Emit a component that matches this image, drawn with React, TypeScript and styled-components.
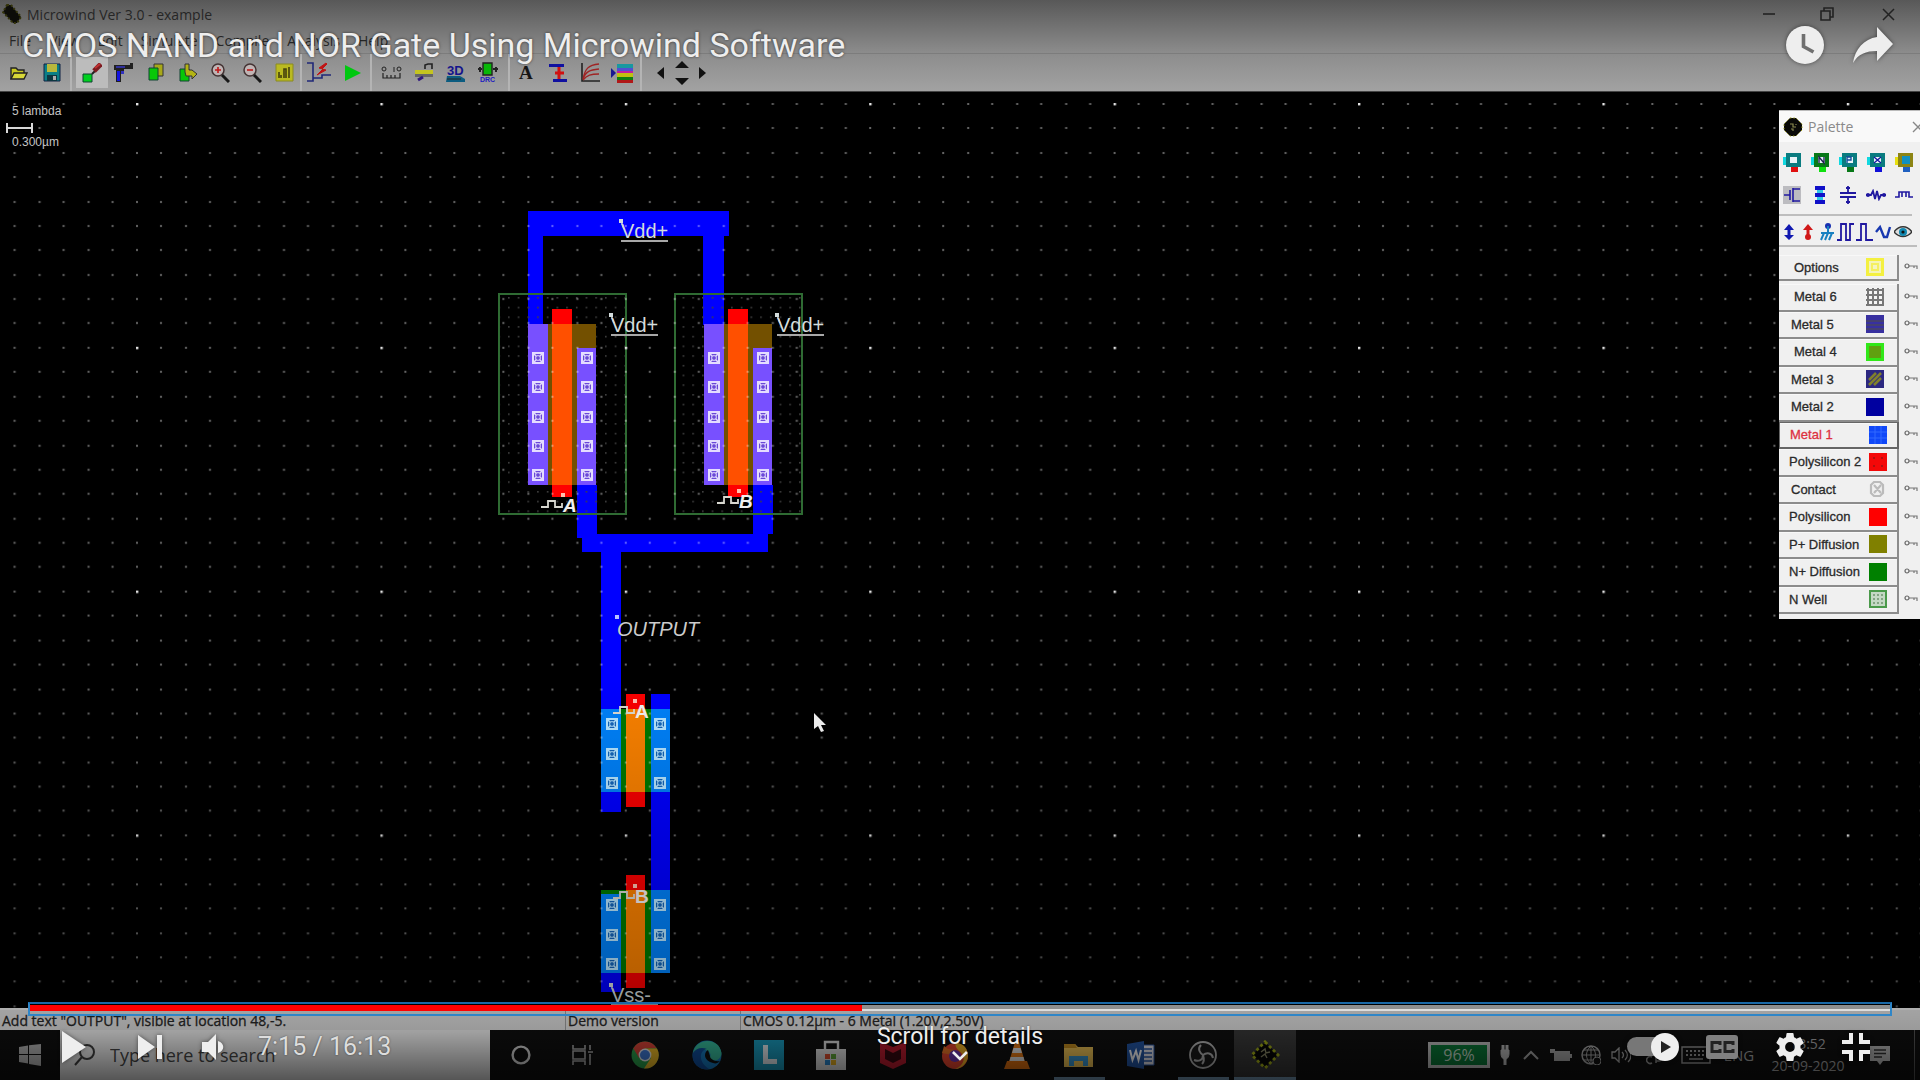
import React, { useState } from 'react';
import styled, { createGlobalStyle } from 'styled-components';

const Global = createGlobalStyle`
  *, *::before, *::after { box-sizing: border-box; }
  body { margin: 0; background: #000; }
  button, input { font: inherit; color: inherit; }
  button { border: 0; padding: 0; background: none; cursor: pointer; }
  svg { display: block; flex: none; }
`;

const UI_FONT = `'Open Sans', 'Noto Sans', sans-serif`;
const PLAYER_FONT = `Roboto, sans-serif`;
const CAD_FONT = `'Liberation Sans', Arial, sans-serif`;

/* ---------- page frame ---------- */

const Player = styled.main`
  position: relative;
  display: flex;
  flex-direction: column;
  min-height: 100vh;
  overflow: hidden;
  background: #000;
  font-family: ${UI_FONT};
`;

const WindowChrome = styled.header`
  background: linear-gradient(#585858, #8c8c8c 58%, #a2a2a2);
  border-bottom: 1px solid #444;
  color: #262626;
`;

const TitleBar = styled.div`
  display: flex;
  align-items: center;
  height: 28px;
  padding-left: 2px;
  gap: 5px;
  font-size: 14px;
`;

const TitleText = styled.span`
  flex: 1;
`;

const WindowButtons = styled.div`
  display: flex;
`;

const WindowButton = styled.button`
  display: grid;
  place-items: center;
  width: 58px;
  height: 28px;
  &:last-child { width: 64px; }
`;

const MenuBar = styled.nav`
  display: flex;
  align-items: center;
  height: 26px;
  padding-left: 9px;
  gap: 18px;
  font-size: 14px;
  border-bottom: 1px solid #7c7c7c;
`;

const Toolbar = styled.div`
  display: flex;
  align-items: center;
  height: 37px;
  padding-left: 2px;
`;

const ToolGroup = styled.div<{ $cell?: number; $lead?: number; $pad?: number }>`
  display: flex;
  height: 37px;
  align-items: center;
  padding: 0 ${(p) => p.$pad ?? 2}px 0 ${(p) => p.$lead ?? 2}px;
  border-right: 2px solid #b4b4b4;
  button { width: ${(p) => p.$cell ?? 32}px; }
  &:last-child { border-right: 0; }
`;

const Tool = styled.button<{ $on?: boolean }>`
  display: grid;
  place-items: center;
  height: 31px;
  background: ${(p) => (p.$on ? '#bcbcbc' : 'none')};
`;

/* ---------- layout canvas ---------- */

const Workspace = styled.section`
  position: relative;
  flex: 1;
  min-height: 560px;
  overflow: hidden;
  background: #000;
`;

const Layout = styled.svg`
  position: absolute;
  inset: 0;
  width: 100%;
  height: 100%;
  font-family: ${CAD_FONT};
`;

const Palette = styled.aside`
  position: absolute;
  top: 18px;
  right: 0;
  width: 141px;
  padding-bottom: 5px;
  overflow: hidden;
  background: #f0f0f0;
  border-top: 1px solid #bbb;
  color: #333;
`;

const PaletteHeader = styled.div`
  display: flex;
  align-items: center;
  height: 31px;
  padding-left: 4px;
  gap: 5px;
  background: #f9f9f9;
  color: #8a8a8a;
  font-size: 14px;
`;

const PaletteTitle = styled.span`
  flex: 1;
`;

const PaletteClose = styled.button`
  width: 8px;
  overflow: hidden;
`;

const PaletteIcons = styled.div`
  display: grid;
  grid-template-columns: repeat(5, 28px);
  grid-auto-rows: 32px;
  height: 74px;
  padding-top: 5px;
  margin-right: 8px;
  margin-left: -1px;
  border-bottom: 2px solid #bdbdbd;
`;

const PaletteSources = styled.div`
  display: grid;
  grid-template-columns: repeat(7, 19px);
  height: 31px;
  margin: 0 3px 8px 0;
  padding-top: 2px;
  border-bottom: 2px solid #bdbdbd;
`;

const PaletteTool = styled.button`
  display: grid;
  place-items: center;
`;

const Layers = styled.div`
  display: grid;
  grid-template-rows: repeat(12, 1fr);
  height: 330px;
`;

const LayerRow = styled.div`
  display: grid;
  grid-template-columns: 120px 1fr;
  align-items: stretch;
`;

const LayerButton = styled.button<{ $indent: number; $active?: boolean; $wide?: boolean }>`
  display: flex;
  align-items: center;
  justify-content: space-between;
  min-height: 26px;
  padding: 0 ${(p) => (p.$wide ? 10 : 13)}px 0 ${(p) => p.$indent}px;
  border: solid ${(p) => (p.$active ? '#666' : '#8c8c8c')};
  border-width: ${(p) => (p.$active ? '1px 2px 2px 1px' : '0 2px 2px 0')};
  box-shadow: inset 0 1px #f8f8f8;
  color: ${(p) => (p.$active ? '#dd3040' : '#2a2a2a')};
  font-family: ${CAD_FONT};
  font-size: 13px;
  white-space: nowrap;
  -webkit-text-stroke: 0.3px;
`;

const KeyButton = styled.button`
  display: grid;
  place-items: center;
  padding-left: 2px;
`;

const OptionsRow = styled(LayerRow)`
  margin-bottom: 3px;
`;

/* ---------- status + taskbar ---------- */

const StatusBar = styled.footer`
  display: grid;
  grid-template-columns: 565px 175px 1fr;
  height: 22px;
  background: #efefef;
  border-top: 2px solid #fff;
  color: #2a2a2a;
  font-size: 14px;
  line-height: 22px;
`;

const StatusCell = styled.span`
  padding-left: 2px;
  white-space: nowrap;
  -webkit-text-stroke: 0.3px;
  & + & { border-left: 1px solid #aaa; }
`;

const Taskbar = styled.div`
  display: flex;
  height: 50px;
  background: #101010;
  color: #e8e8e8;
`;

const StartButton = styled.button`
  display: grid;
  place-items: center;
  width: 60px;
`;

const SearchBox = styled.label`
  display: flex;
  align-items: center;
  width: 430px;
  padding-left: 14px;
  gap: 14px;
  background: #fafafa;
  color: #444;
  input {
    flex: 1;
    border: 0;
    padding: 0;
    background: none;
    font-size: 18px;
    outline: 0;
  }
  input::placeholder { color: #4a4a4a; opacity: 1; }
`;

const TaskButton = styled.button<{ $running?: boolean; $active?: boolean }>`
  display: grid;
  place-items: center;
  width: 62px;
  background: ${(p) =>
    p.$active
      ? 'linear-gradient(#7fa6c4, #7fa6c4) bottom / 100% 3px no-repeat, #3a3a3a'
      : p.$running
      ? 'linear-gradient(#7fa6c4, #7fa6c4) bottom / 51px 3px no-repeat'
      : 'none'};
`;

const Tray = styled.div`
  display: flex;
  align-items: center;
  margin-left: auto;
  color: #aaa;
`;

const TrayItem = styled.button<{ $w: number }>`
  display: grid;
  place-items: center;
  width: ${(p) => p.$w}px;
  height: 50px;
  font-size: 15px;
`;

const Battery = styled.span`
  display: grid;
  place-items: center;
  width: 62px;
  height: 26px;
  margin-right: 4px;
  border: 3px solid #c4c4c4;
  background: #0a7a38;
  color: #c8dccc;
  font-size: 16px;
  line-height: 18px;
`;

const Clock = styled.time`
  width: 76px;
  margin-left: 8px;
  font-size: 14px;
  line-height: 22px;
  text-align: center;
  white-space: nowrap;
`;

const ShowDesktop = styled.button`
  width: 6px;
  height: 50px;
  border-left: 1px solid #555;
`;

/* ---------- video player overlay ---------- */

const Shade = styled.div`
  position: absolute;
  inset: auto 0 0;
  height: 400px;
  pointer-events: none;
  background: linear-gradient(transparent, rgba(0, 0, 0, 0.12) 35%, rgba(0, 0, 0, 0.26) 75%, rgba(0, 0, 0, 0.36) 88%, rgba(0, 0, 0, 0.66));
`;

const TopOverlay = styled.div`
  position: absolute;
  inset: 0 0 auto;
  display: flex;
  align-items: center;
  height: 90px;
  padding: 0 27px 0 22px;
  gap: 28px;
  color: #eee;
  font-family: ${PLAYER_FONT};
`;

const VideoTitle = styled.h1`
  flex: 1;
  margin: 0;
  font-size: 34px;
  font-weight: 400;
  line-height: 40px;
  text-shadow: 0 0 3px rgba(0, 0, 0, 0.6);
`;

const BottomOverlay = styled.div`
  position: absolute;
  inset: auto 0 0;
  height: 78px;
  color: #eee;
  font-family: ${PLAYER_FONT};
`;

const Seek = styled.input<{ $played: number }>`
  appearance: none;
  display: block;
  width: calc(100% - 56px);
  height: 14px;
  margin: 0 28px;
  border: 2px solid #2f86c8;
  border-top-color: #1a68a6;
  background:
    linear-gradient(90deg, #f00 ${(p) => p.$played}%, transparent 0) 0 1px / 100% 6px no-repeat,
    linear-gradient(#ddd, #ddd) 0 5px / 100% 2px no-repeat,
    linear-gradient(#8e8e8e, #8e8e8e) 0 1px / 100% 6px no-repeat;
  &::-webkit-slider-thumb { appearance: none; width: 0; height: 0; }
`;

const Controls = styled.div`
  display: flex;
  align-items: center;
  height: 62px;
  padding: 0 50px 0 62px;
`;

const Control = styled.button<{ $gap?: number }>`
  display: grid;
  place-items: center;
  margin-right: ${(p) => p.$gap ?? 0}px;
  filter: drop-shadow(0 0 2px rgba(0, 0, 0, 0.5));
`;

const Time = styled.span`
  color: #ddd;
  font-size: 25px;
  line-height: 28px;
  text-shadow: 0 0 2px rgba(0, 0, 0, 0.5);
`;

const RightControls = styled.div`
  display: flex;
  align-items: center;
  margin-left: auto;
`;

const ScrollHint = styled.button`
  position: absolute;
  left: 50%;
  top: 21px;
  display: grid;
  justify-items: center;
  transform: translateX(-50%);
  font-size: 23px;
  line-height: 28px;
  text-shadow: 0 0 2px rgba(0, 0, 0, 0.6);
`;

/* ---------- drawings ---------- */

type IconProps = { w?: number; h?: number; box?: string; children: React.ReactNode };
const Icon = ({ w = 20, h = 20, box, children }: IconProps) => (
  <svg width={w} height={h} viewBox={box ?? `0 0 ${w} ${h}`} fill="none" aria-hidden="true">
    {children}
  </svg>
);

const ChipIcon = ({ size = 20, edge = '#9a9a20' }: { size?: number; edge?: string }) => (
  <Icon w={size} h={size} box="0 0 20 20">
    <path d="M7 1h6l6 6v6l-6 6H7l-6-6V7z" fill="#0a0a08" stroke={edge} strokeWidth="1" strokeDasharray="1.4 2" />
    <path d="M7 7h3v3h3M8 12h2v2M13 7v1" stroke="#8a8a50" strokeWidth="1.2" />
  </Icon>
);

const tools: { name: string; cell?: number; lead?: number; pad?: number; items: { name: string; on?: boolean; art: React.ReactNode }[] }[] = [
  {
    name: 'File',
    cell: 33,
    lead: 0,
    items: [
      { name: 'Open', art: <Icon w={18} h={14}><path d="M1 13V2h5l2 2h6v3" fill="#c8c820" stroke="#222" strokeWidth="1.4" /><path d="M1 13l3-6h13l-3 6z" fill="#d8d838" stroke="#222" strokeWidth="1.4" /></Icon> },
      { name: 'Save', art: <Icon w={18} h={19}><path d="M1 1h16v17H1z" fill="#0a7e86" stroke="#124" /><path d="M4 1h10v8H4z" fill="#b8b83c" /><path d="M4 12h10v6H4z" fill="#0c3640" /><path d="M10 13h3v4h-3z" fill="#aaa" /></Icon> },
    ],
  },
  {
    name: 'Edit',
    lead: 4,
    pad: 0,
    items: [
      { name: 'Draw box', on: true, art: <Icon w={20} h={20}><path d="M1 11h9v8H1z" fill="#00d020" stroke="#143" /><path d="M10 11l3-3" stroke="#222" strokeWidth="2" /><path d="M12 8l7-7" stroke="#7c1a20" strokeWidth="5" /><path d="M13 5l5-4" stroke="#c03030" strokeWidth="2" /></Icon> },
      { name: 'Delete', art: <Icon w={20} h={20}><path d="M0 2h16V0h3v6h-9v5H7v8H2V7H0z" fill="#202020" /><path d="M3 8h3v10H3z" fill="#1414e0" /><path d="M2 4h9" stroke="#30309c" strokeWidth="2" /><path d="M7 8h3v3H7z" fill="#3030c0" /></Icon> },
      { name: 'Copy', art: <Icon w={16} h={19}><path d="M6 1h9v12H6z" fill="#a8a818" stroke="#333" /><path d="M1 5h9v12H1z" fill="#08c808" stroke="#143" /></Icon> },
      { name: 'Move', art: <Icon w={19} h={19}><path d="M1 6h9v12H1z" fill="#08c808" stroke="#143" /><path d="M6 9V1h4v6h3l5 4-5 5v-3H7z" fill="#b4b414" stroke="#333" /></Icon> },
      { name: 'Zoom in', art: <Icon w={20} h={20}><circle cx="8" cy="7" r="6" fill="#c0b4b4" stroke="#433" strokeWidth="1.5" /><path d="M5 7h6M8 4v6" stroke="#c01818" strokeWidth="1.6" /><path d="M12 12l7 7" stroke="#181818" strokeWidth="3" /></Icon> },
      { name: 'Zoom out', art: <Icon w={20} h={20}><circle cx="8" cy="7" r="6" fill="#c0b4b4" stroke="#433" strokeWidth="1.5" /><path d="M5 7h6" stroke="#c01818" strokeWidth="1.6" /><path d="M12 12l7 7" stroke="#181818" strokeWidth="3" /></Icon> },
      { name: 'View all', art: <Icon w={19} h={19}><path d="M1 1h17v17H1z" fill="#baba20" stroke="#8a8a20" /><path d="M4 15V9M6 15v-3M9 15V6h2v9M14 15V4" stroke="#44400c" strokeWidth="1.6" /></Icon> },
    ],
  },
  {
    name: 'Simulation',
    cell: 34,
    lead: 0,
    pad: 0,
    items: [
      { name: 'Simulation parameters', art: <Icon w={26} h={22}><path d="M1 1h6v18H1M7 16h9v-3h9" stroke="#202878" strokeWidth="1.6" /><path d="M20 1l-7 5 4 1-6 6 9-5-4-1 5-5z" fill="#c01414" stroke="#c01414" /></Icon> },
      { name: 'Run simulation', art: <Icon w={18} h={18}><path d="M1 1l16 8-16 8z" fill="#00c810" /></Icon> },
    ],
  },
  {
    name: 'Views',
    lead: 4,
    pad: 4,
    items: [
      { name: 'Measure', art: <Icon w={22} h={14}><path d="M2 7v5h17V7M6 12V9M10 12V9M14 12V9" stroke="#222" strokeWidth="1.2" /><circle cx="3" cy="3" r="2" stroke="#222" /><path d="M13 1v5" stroke="#222" /><circle cx="18" cy="3" r="2" stroke="#222" /></Icon> },
      { name: 'Process section', art: <Icon w={20} h={20}><path d="M11 6V2l3-1h4v5" stroke="#222" strokeWidth="1.6" /><path d="M1 7h18v4H1z" fill="#c4c420" /><path d="M1 11h18v3H1z" fill="#666" /><path d="M4 17l5-3" stroke="#301880" strokeWidth="3" /></Icon> },
      { name: '3D view', art: <Icon w={22} h={22}><text x="2" y="13" fontFamily={CAD_FONT} fontWeight="700" fontSize="13" fill="#14148c">3D</text><path d="M2 14h13l5 3v3H1z" fill="#0c5c80" /><path d="M2 17h14" stroke="#222" /></Icon> },
      { name: 'Design rule checker', art: <Icon w={24} h={24}><path d="M7 2h9v12H7z" fill="#08b808" stroke="#222" strokeWidth="1.4" /><path d="M2 8h4M17 8h5M4 6v5M20 6v5" stroke="#222" strokeWidth="2" /><text x="4" y="21" fontFamily={CAD_FONT} fontSize="7" fontWeight="700" fill="#1c1cc0">DRC</text></Icon> },
    ],
  },
  {
    name: 'Annotations',
    lead: 0,
    pad: 2,
    items: [
      { name: 'Add text', art: <Icon w={16} h={20}><text x="1" y="16" fontFamily="'Liberation Serif', serif" fontWeight="700" fontSize="19" fill="#151515">A</text></Icon> },
      { name: 'Add contact', art: <Icon w={20} h={20}><path d="M1 1h15v3H1zM5 16h14v3H5z" fill="#1010a0" /><path d="M11 4v12M7 10h9" stroke="#d01010" strokeWidth="3" /></Icon> },
      { name: 'MOS characteristics', art: <Icon w={20} h={20}><path d="M2 0v18h18" stroke="#222" strokeWidth="1.6" /><path d="M3 16C5 6 8 2 19 1M3 16C6 8 10 7 19 6M3 17c4-5 8-6 16-6" stroke="#a02424" strokeWidth="1.4" /></Icon> },
      { name: 'Layer palette', art: <Icon w={22} h={20}><path d="M0 5l5 5-5 5z" fill="#181890" /><path d="M6 1h16v4H6z" fill="#1898a0" /><path d="M6 5h16v3H6z" fill="#5050d0" /><path d="M6 8h16v2H6z" fill="#c020a0" /><path d="M6 10h16v4H6z" fill="#c0c010" /><path d="M6 14h16v3H6z" fill="#108010" /><path d="M6 17h16v3H6z" fill="#b01818" /></Icon> },
    ],
  },
  {
    name: 'Pan',
    cell: 21,
    lead: 8,
    items: [
      { name: 'Pan left', art: <Icon w={7} h={12}><path d="M7 0v12L0 6z" fill="#111" /></Icon> },
      { name: 'Pan up or down', art: <Icon w={14} h={24}><path d="M0 7l7-7 7 7zM0 17h14l-7 7z" fill="#111" /></Icon> },
      { name: 'Pan right', art: <Icon w={7} h={12}><path d="M0 0v12l7-6z" fill="#111" /></Icon> },
    ],
  },
];

const Device = ({ body, side, foot, mark }: { body: string; side: string; foot: string; mark: string }) => (
  <Icon w={19} h={20}>
    <path d="M0 4h4v8H0z" fill={side} />
    <path d="M8 13h7v6H8z" fill={foot} />
    <path d="M3 0h15v14H3z" fill={body} />
    <path d="M7 4h7v6H7z" fill="#e8f4f8" />
    {mark === 'N' && <path d="M8 10V4l5 6V4" stroke="#225" strokeWidth="1.4" />}
    {mark === 'P' && <path d="M8 10V4h4v3H8" stroke="#114a9a" strokeWidth="1.4" />}
    {mark === 'X' && <path d="M7 4l7 6M14 4l-7 6" stroke="#1818a0" strokeWidth="1.4" />}
    {mark === 'M' && <path d="M7 3h8v8H7z" fill="#1090c0" />}
  </Icon>
);

const INK = '#2018a0';
const paletteIcons: [string, React.ReactNode][] = [
  ['Contact generator', <Device body="#0a7c80" side="#10d8e0" foot="#e01010" mark="" />],
  ['N-channel MOS', <Device body="#087818" side="#10d8e0" foot="#10e010" mark="N" />],
  ['P-channel MOS', <Device body="#0a7c80" side="#10d8e0" foot="#087818" mark="P" />],
  ['Via', <Device body="#0a7c80" side="#10d8e0" foot="#1010d8" mark="X" />],
  ['Via stack', <Device body="#8c8414" side="#e8e010" foot="#2060c0" mark="M" />],
  ['MOS symbol', <Icon w={18} h={20}><path d="M0 1h18v18H0z" fill="#bcbcc0" /><path d="M1 10h6M7 5v10M10 3v14M10 4h7M10 16h7" stroke={INK} strokeWidth="1.6" /></Icon>],
  ['Bus', <Icon w={12} h={20}><path d="M1 1h10v4H1zM1 8h10v4H1zM1 15h10v4H1z" fill="#1010c8" /><path d="M3 5h6v3H3zM3 12h6v3H3z" fill="#30c8e8" /></Icon>],
  ['Capacitor', <Icon w={18} h={20}><path d="M9 1v7M1 8h16M1 12h16M9 12v7M7 3h4M7 17h4" stroke={INK} strokeWidth="1.8" /></Icon>],
  ['Resistor', <Icon w={22} h={12}><path d="M1 6h5l2-4 2 8 2-8 2 8 2-4h5" stroke={INK} strokeWidth="1.8" /><circle cx="3" cy="6" r="2" fill={INK} /><circle cx="19" cy="6" r="2" fill={INK} /></Icon>],
  ['Inductor', <Icon w={20} h={10}><path d="M1 7h4V2h3v5V2h4v5V2h3v5h4" stroke={INK} strokeWidth="1.6" /></Icon>],
];

const sources: [string, React.ReactNode][] = [
  ['Supply', <Icon w={12} h={16}><path d="M6 0l5 6H1zM6 16l5-5H1z" fill="#1018b0" /><path d="M6 4v8" stroke="#1018b0" strokeWidth="3" /></Icon>],
  ['Ground supply', <Icon w={12} h={16}><path d="M6 0l5 6H1z" fill="#d01818" /><circle cx="6" cy="13" r="3" fill="#d01818" /><path d="M6 4v8" stroke="#d01818" strokeWidth="3" /></Icon>],
  ['Ground', <Icon w={16} h={18}><circle cx="9" cy="3" r="3" fill="#1830b0" /><path d="M9 3v7M2 10h13M5 10l-3 7M9 10l-3 7M13 10l-3 7" stroke="#1880c0" strokeWidth="2" /></Icon>],
  ['Clock', <Icon w={17} h={18}><path d="M0 17h4V1h5v16h4V1h4" stroke={INK} strokeWidth="1.8" /></Icon>],
  ['Pulse', <Icon w={17} h={18}><path d="M0 17h5V1h5v16h7" stroke={INK} strokeWidth="1.8" /></Icon>],
  ['Sinus', <Icon w={17} h={16}><path d="M1 8l4-5 4 10h3l3-10" stroke="#1838b0" strokeWidth="2.4" /></Icon>],
  ['Visible node', <Icon w={18} h={12}><path d="M0 6c5-7 13-7 18 0-5 6-13 6-18 0z" fill="#dcdcdc" stroke="#333" strokeWidth="1.4" /><circle cx="9" cy="6" r="4" fill="#1088b0" /><circle cx="9" cy="6" r="1.6" fill="#111" /></Icon>],
];

type Layer = { name: string; indent: number; wide?: boolean; fill: string; extra?: React.ReactNode };
const layers: Layer[] = [
  { name: 'Metal 6', indent: 15, fill: '#f4f4f4', extra: <path d="M0 2h18M0 7h18M0 12h18M2 0v18M7 0v18M12 0v18M17 0v18M0 17h18" stroke="#777" strokeWidth="2" /> },
  { name: 'Metal 5', indent: 12, fill: '#3830a0', extra: <path d="M0 6h18M0 10h18M0 14h18" stroke="#444070" strokeWidth="2" /> },
  { name: 'Metal 4', indent: 15, fill: '#30e818', extra: <path d="M3 3h12v12H3z" fill="#60a010" /> },
  { name: 'Metal 3', indent: 12, fill: '#2c2880', extra: <path d="M3 10l7-7M3 15L15 3M8 15l7-7" stroke="#80802c" strokeWidth="2.6" /> },
  { name: 'Metal 2', indent: 12, fill: '#0000a0' },
  { name: 'Metal 1', indent: 10, wide: true, fill: '#1048f8', extra: <path d="M0 6h18M0 12h18M6 0v18M12 0v18" stroke="#3068ff" /> },
  { name: 'Polysilicon 2', indent: 10, wide: true, fill: '#f40808', extra: <path d="M4 4h2v2H4zM12 4h2v2h-2zM4 12h2v2H4zM12 12h2v2h-2z" fill="#b01010" /> },
  { name: 'Contact', indent: 12, fill: '#f0f0f0', wide: true, extra: <path d="M5 2h6l3 3v8l-3 3H5l-3-3V5zM5 5l7 8M12 5l-7 8" stroke="#bbb" strokeWidth="2.2" /> },
  { name: 'Polysilicon', indent: 10, wide: true, fill: '#ff0000' },
  { name: 'P+ Diffusion', indent: 10, wide: true, fill: '#808000' },
  { name: 'N+ Diffusion', indent: 10, wide: true, fill: '#008000' },
  { name: 'N Well', indent: 10, wide: true, fill: '#c4d8c4', extra: <><path d="M1 1h16v16H1z" stroke="#4a9a4a" strokeWidth="2" /><path d="M5 4v11M9 4v11M13 4v11" stroke="#689068" strokeWidth="1.4" strokeDasharray="2 2" /></> },
];

const Swatch = ({ fill, children }: { fill: string; children?: React.ReactNode }) => (
  <Icon w={18} h={18}><path d="M0 0h18v18H0z" fill={fill} />{children}</Icon>
);

const Key = () => (
  <Icon w={14} h={10}><circle cx="3" cy="3" r="2" stroke="#666" strokeWidth="1.2" /><path d="M5 3h8v3M10 3v2" stroke="#777" strokeWidth="1.2" /></Icon>
);

const Contact = ({ x, y, light, dark }: { x: number; y: number; light: string; dark: string }) => (
  <g transform={`translate(${x} ${y})`} stroke={light}>
    <rect x="-5" y="-5" width="10" height="10" fill={dark} strokeWidth="2" />
    <path d="M-4 -4L4 4M4 -4L-4 4" strokeWidth="1.6" />
    <circle r="2.4" strokeWidth="1" fill={dark} />
  </g>
);

const PmosDevice = ({ well, left, poly, right, end }: { well: number; left: number; poly: number; right: number; end: number }) => (
  <g>
    <rect x={well} y="294" width="127" height="220" fill="url(#wellDots)" stroke="#2f6b33" strokeWidth="2" />
    <rect x={left} y="324" width={end - left} height="161" fill="#735000" />
    <rect x={left} y="324" width="20" height="161" fill="#7850ff" />
    <rect x={right} y="348" width={end - right} height="137" fill="#7850ff" />
    <rect x={poly} y="309" width="20" height="188" fill="#ff0000" />
    <rect x={poly} y="324" width="20" height="161" fill="#ff5000" />
    {[358, 387, 417, 446, 475].map((y) => (
      <g key={y}>
        <Contact x={left + 10} y={y} light="#e4dcff" dark="#6a48d8" />
        <Contact x={right + 10} y={y} light="#e4dcff" dark="#6a48d8" />
      </g>
    ))}
  </g>
);

const NmosDevice = ({ top, cut = 0 }: { top: number; cut?: number }) => (
  <g>
    <rect x="601" y={top} width="69" height="83" fill="#007800" />
    <rect x="601" y={top + cut} width="20" height={83 - cut} fill="#0080f8" />
    <rect x="651" y={top} width="19" height="83" fill="#0080f8" />
    <rect x="626" y={top - 15} width="19" height="113" fill="#f80000" />
    <rect x="626" y={top} width="19" height="83" fill="#f88000" />
    {[15, 45, 74].map((d) => (
      <g key={d}>
        <Contact x={612} y={top + d} light="#b4e4ff" dark="#1464b8" />
        <Contact x={660} y={top + d} light="#b4e4ff" dark="#1464b8" />
      </g>
    ))}
  </g>
);

const Supply = ({ x, y, children }: { x: number; y: number; children: string }) => (
  <g fill="#d4dcdc">
    <path d={`M${x} ${y - 17}l3 8`} stroke="#d4dcdc" strokeWidth="1.4" />
    <rect x={x - 2} y={y - 19} width="4" height="4" />
    <text x={x} y={y} fontSize="20">{children}</text>
    <rect x={x} y={y + 2} width="47" height="2" fill="#a8a8a8" />
  </g>
);

const Signal = ({ x, y, italic, children }: { x: number; y: number; italic?: boolean; children: string }) => (
  <g fill="#f0f0f0">
    <path d={`M${x - 22} ${y - 5}h7v-6h7v6h7v-4`} stroke="#d8d8d0" strokeWidth="1.8" fill="none" />
    <rect x={x - 2} y={y - 19} width="4" height="4" fill="#ffc0b0" />
    <text x={x} y={y} fontSize="19" fontWeight="700" fontStyle={italic ? 'italic' : 'normal'}>{children}</text>
  </g>
);

const minorDots = Array.from({ length: 100 }, (_, i) => ({ x: i % 10, y: Math.floor(i / 10) }));

const LayoutDrawing = () => (
  <Layout role="img" aria-label="CMOS NAND gate layout">
    <defs>
      <pattern id="grid" width="244.4" height="243.8" patternUnits="userSpaceOnUse" patternTransform="translate(136 103)">
        {minorDots.map(({ x, y }) =>
          x || y ? <rect key={`${x}-${y}`} x={Math.round(x * 24.44)} y={Math.round(y * 24.38)} width="2" height="2" fill="#fff" opacity="0.4" /> : null
        )}
        <rect width="2.4" height="2.4" fill="#e4e4e4" />
      </pattern>
      <pattern id="wellDots" width="9.7" height="9.7" patternUnits="userSpaceOnUse" patternTransform="translate(508 297)">
        <rect width="1.6" height="1.6" fill="#404040" />
      </pattern>
    </defs>
    <g transform="translate(0 -92)">
      <g fill="#0000ff">
        <rect x="528" y="211" width="201" height="25" />
        <rect x="528" y="211" width="15" height="114" />
        <rect x="703" y="211" width="21" height="114" />
        <rect x="577" y="485" width="20" height="53" />
        <rect x="753" y="485" width="20" height="49" />
        <rect x="582" y="534" width="186" height="18" />
        <rect x="601" y="552" width="20" height="260" />
        <rect x="651" y="694" width="19" height="197" />
        <rect x="601" y="973" width="20" height="19" />
      </g>
      <PmosDevice well={499} left={528} poly={552} right={577} end={596} />
      <PmosDevice well={675} left={704} poly={728} right={753} end={772} />
      <NmosDevice top={709} />
      <NmosDevice top={890} cut={4} />
      <rect y="92" width="100%" height="100%" fill="url(#grid)" />
      <Supply x={621} y={238}>Vdd+</Supply>
      <Supply x={611} y={332}>Vdd+</Supply>
      <Supply x={777} y={332}>Vdd+</Supply>
      <Supply x={611} y={1002}>Vss-</Supply>
      <Signal x={563} y={512} italic>A</Signal>
      <Signal x={739} y={508} italic>B</Signal>
      <Signal x={635} y={718}>A</Signal>
      <Signal x={635} y={903}>B</Signal>
      <rect x="615" y="615" width="4" height="4" fill="#b8c4ff" />
      <text x="617" y="636" fontSize="20" fontStyle="italic" fill="#ccc">OUTPUT</text>
      <g fill="#c4c4c4" fontSize="12">
        <text x="12" y="115">5 lambda</text>
        <text x="12" y="146">0.300µm</text>
        <path d="M7 123v10M32 123v10M7 128h25" stroke="#d8d8d8" strokeWidth="2" />
      </g>
      <path d="M814 713v16l4-3 3 6 3-1-3-6h5z" fill="#f4f4f4" />
    </g>
  </Layout>
);

const taskIcons: { name: string; running?: boolean; active?: boolean; art: React.ReactNode }[] = [
  { name: 'Cortana', art: <Icon><circle cx="10" cy="10" r="8.4" stroke="#ddd" strokeWidth="2.4" /></Icon> },
  { name: 'Task view', art: <Icon w={22}><path d="M1 0v4h12V0M1 20v-4h12v4M1 6h12v8H1zM18 0v5M18 9v11M16 7h5" stroke="#aaa" strokeWidth="1.6" /></Icon> },
  { name: 'Chrome', art: <Icon w={28} h={28}><circle cx="14" cy="14" r="13.5" fill="#2ba24c" /><path d="M2.3 7.2A13.5 13.5 0 0 1 25.7 7.2L14 7.5 8 17z" fill="#dd4538" /><path d="M14 7.5H26A13.5 13.5 0 0 1 13 27.5L20 17z" fill="#efbc28" /><circle cx="14" cy="14" r="6.4" fill="#eee" /><circle cx="14" cy="14" r="5" fill="#3f7ddb" /></Icon> },
  { name: 'Edge', art: <Icon w={30} h={30}><circle cx="15" cy="15" r="14.5" fill="#167cc4" /><path d="M1 13C3-2 27-4 29.5 13c0 6-6 9-10 7-3-1-1-3-1-5 0-5-8-8-17.5-2z" fill="#38c0a0" /><path d="M1 13c3-5 9-6 14-4-7 1-10 12 2 20C7 31-1 23 1 13z" fill="#1050a0" /><path d="M16 10c-5 3-4 11 5 13 3 1 5 0 7-2-5 1-10-2-10-5z" fill="#101010" /></Icon> },
  { name: 'L application', art: <Icon w={30} h={30}><path d="M0 0h30v30H0z" fill="#1a9dc0" /><path d="M9 5h5v14h9v5H9z" fill="#e8f0f4" /></Icon> },
  { name: 'Microsoft Store', art: <Icon w={30} h={30}><path d="M9 9V2h13v7" stroke="#ddd" strokeWidth="2.4" /><path d="M0 9h30v21H0z" fill="#e4e4e4" /><path d="M9 14h5v5H9z" fill="#e05030" /><path d="M15 14h5v5h-5z" fill="#60a838" /><path d="M9 20h5v5H9z" fill="#2a88d0" /><path d="M15 20h5v5h-5z" fill="#e8b020" /></Icon> },
  { name: 'McAfee', art: <Icon w={28} h={28}><path d="M1 1l13 5 13-5v21l-13 6-13-6z" fill="#c01c30" /><path d="M6 8l8 4 8-4v10l-8 4-8-4z" fill="#380810" /></Icon> },
  { name: 'Firefox', art: <Icon w={28} h={28}><circle cx="14" cy="15" r="13" fill="#f04830" /><path d="M14 2c10 0 13 7 13 13S21 28 14 28c8-3 10-9 8-14-2-4-7-4-8-12z" fill="#f8b828" /><path d="M1 12L3 5l4 3 7 1-3 5z" fill="#f07828" /><circle cx="14" cy="15" r="6" fill="#7038b8" /></Icon> },
  { name: 'VLC', art: <Icon w={26} h={28}><path d="M11 1h4l6 20H5z" fill="#f08018" /><path d="M9.5 7h7l1.5 5H8zM6.5 16h13l1 4h-15z" fill="#eee" /><path d="M3 20h20l3 8H0z" fill="#e87410" /></Icon> },
  { name: 'File Explorer', running: true, art: <Icon w={30} h={24}><path d="M0 1h11l3 3h15v20H0z" fill="#f4c858" /><path d="M0 1h11l2 4H0z" fill="#c89020" /><path d="M5 13h19v10h-5v-5h-9v5H5z" fill="#3a9ad4" /></Icon> },
  { name: 'Word', art: <Icon w={28} h={28}><path d="M13 4h14v20H13z" fill="#e8e8f0" stroke="#2858a8" /><path d="M17 8h8M17 12h8M17 16h8M17 20h8" stroke="#2858a8" strokeWidth="1.5" /><path d="M0 3l17-3v28L0 25z" fill="#2458a8" /><path d="M3 9l2.5 10L9 10l2.5 9L14 9" stroke="#fff" strokeWidth="2" /></Icon> },
  { name: 'OBS Studio', running: true, art: <Icon w={28} h={28}><circle cx="14" cy="14" r="13" fill="#1a1a1a" stroke="#bbb" strokeWidth="1.8" /><path d="M12 4c-4 4-1 8 2 10 0 5-4 7-9 5M14 14c4-3 9-2 10 3M14 14c1 3 2 6-1 9" stroke="#bbb" strokeWidth="2" /></Icon> },
  {
    name: 'Microwind',
    active: true,
    running: true,
    art: (
      <Icon w={30} h={30}>
        <path d="M15 2l13 13-13 13L2 15z" fill="#0a0a08" stroke="#a8b418" strokeWidth="3" strokeDasharray="3 2.6" />
        <path d="M15 4l11 11-11 11L4 15z" fill="#060606" />
        <path d="M11 12l4-3 1 4 4-1M11 17l4-3 2 4" stroke="#8c8c6a" strokeWidth="1.4" />
      </Icon>
    ),
  },
];

const menus = ['File', 'View', 'Edit', 'Simulate', 'Compile', 'Analysis', 'Help'];

export default function App() {
  const [seconds, setSeconds] = useState(435);
  const [layer, setLayer] = useState('Metal 1');
  const total = 973;
  const clock = (s: number) => `${Math.floor(s / 60)}:${String(s % 60).padStart(2, '0')}`;

  return (
    <Player>
      <Global />
      <WindowChrome>
        <TitleBar>
          <Icon w={20} h={20}><path d="M5 1l4 0 10 12-4 6-4 0L1 8z" fill="#0c0c08" stroke="#34340c" strokeDasharray="2 2" strokeWidth="2" /></Icon>
          <TitleText>Microwind Ver 3.0 - example</TitleText>
          <WindowButtons>
            <WindowButton aria-label="Minimize"><Icon w={12} h={12}><path d="M0 6h12" stroke="#222" strokeWidth="1.6" /></Icon></WindowButton>
            <WindowButton aria-label="Restore"><Icon w={14} h={14}><path d="M1 4h9v9H1zM4 4V1h9v9h-3" stroke="#222" strokeWidth="1.6" /></Icon></WindowButton>
            <WindowButton aria-label="Close"><Icon w={13} h={13}><path d="M1 1l11 11M12 1L1 12" stroke="#222" strokeWidth="1.5" /></Icon></WindowButton>
          </WindowButtons>
        </TitleBar>
        <MenuBar>
          {menus.map((m) => <button key={m}>{m}</button>)}
        </MenuBar>
        <Toolbar>
          {tools.map((g) => (
            <ToolGroup key={g.name} $cell={g.cell} $lead={g.lead} $pad={g.pad}>
              {g.items.map((t) => <Tool key={t.name} aria-label={t.name} $on={t.on}>{t.art}</Tool>)}
            </ToolGroup>
          ))}
        </Toolbar>
      </WindowChrome>

      <Workspace>
        <LayoutDrawing />
        <Palette>
          <PaletteHeader>
            <ChipIcon />
            <PaletteTitle>Palette</PaletteTitle>
            <PaletteClose aria-label="Close palette"><Icon w={12} h={12}><path d="M1 1l10 10M11 1L1 11" stroke="#888" strokeWidth="1.4" /></Icon></PaletteClose>
          </PaletteHeader>
          <PaletteIcons>
            {paletteIcons.map(([n, art]) => <PaletteTool key={n} aria-label={n}>{art}</PaletteTool>)}
          </PaletteIcons>
          <PaletteSources>
            {sources.map(([n, art]) => <PaletteTool key={n} aria-label={n}>{art}</PaletteTool>)}
          </PaletteSources>
          <OptionsRow>
            <LayerButton $indent={15}>Options
              <Swatch fill="#f4f040"><path d="M3 3h12v12H3z" fill="#f4f4b8" /><path d="M5 5h8v8H5z" fill="#f4f060" /><path d="M7 7h4v4H7z" fill="#f4f4c0" /></Swatch>
            </LayerButton>
            <KeyButton aria-label="Protect all layers"><Key /></KeyButton>
          </OptionsRow>
          <Layers>
            {layers.map((l) => (
              <LayerRow key={l.name}>
                <LayerButton $indent={l.indent} $wide={l.wide} $active={l.name === layer} onClick={() => setLayer(l.name)}>
                  {l.name}<Swatch fill={l.fill}>{l.extra}</Swatch>
                </LayerButton>
                <KeyButton aria-label={`Protect ${l.name}`}><Key /></KeyButton>
              </LayerRow>
            ))}
          </Layers>
        </Palette>
      </Workspace>

      <StatusBar>
        <StatusCell>Add text "OUTPUT", visible at location 48,-5.</StatusCell>
        <StatusCell>Demo version</StatusCell>
        <StatusCell>CMOS 0.12µm - 6 Metal (1.20V,2.50V)</StatusCell>
      </StatusBar>

      <Taskbar>
        <StartButton aria-label="Start"><Icon w={22} h={22}><path d="M0 3l9-1.500V10H0zM10 1.300L22 0v10H10zM0 11h9v8.500L0 18zM10 11h12v11l-12-2z" fill="#bbb" /></Icon></StartButton>
        <SearchBox>
          <Icon w={22} h={22}><circle cx="13" cy="8" r="7" stroke="#444" strokeWidth="2" /><path d="M8 13l-7 8" stroke="#444" strokeWidth="2" /></Icon>
          <input type="search" placeholder="Type here to search" aria-label="Type here to search" />
        </SearchBox>
        {taskIcons.map((t) => (
          <TaskButton key={t.name} aria-label={t.name} $running={t.running} $active={t.active}>{t.art}</TaskButton>
        ))}
        <Tray>
          <Battery>96%</Battery>
          <TrayItem $w={22} aria-label="Plugged in"><Icon w={12} h={20}><path d="M2 5h8v4c0 3-2 5-3 5v6H5v-6c-1 0-3-2-3-5zM3 0h2v5H3zM7 0h2v5H7z" fill="#bbb" stroke="#bbb" /></Icon></TrayItem>
          <TrayItem $w={30} aria-label="Show hidden icons"><Icon w={16} h={10}><path d="M1 9l7-7 7 7" stroke="#aaa" strokeWidth="2" /></Icon></TrayItem>
          <TrayItem $w={30} aria-label="Power"><Icon w={22} h={14}><path d="M5 4h14v8H5z" fill="#aaa" stroke="#aaa" strokeWidth="2" /><path d="M20 6h2v4h-2zM0 1h5v4H0z" fill="#aaa" /></Icon></TrayItem>
          <TrayItem $w={30} aria-label="Network"><Icon w={20} h={20}><circle cx="10" cy="10" r="9" stroke="#aaa" strokeWidth="1.5" /><path d="M10 1v18M1 10h18M3 5h14M3 15h14M10 1C4 6 4 14 10 19M10 1c6 5 6 13 0 18" stroke="#aaa" /><circle cx="16" cy="16" r="4" fill="#101010" stroke="#aaa" /></Icon></TrayItem>
          <TrayItem $w={30} aria-label="Volume"><Icon w={20} h={16}><path d="M1 5h3l4-4v14l-4-4H1zM11 5c2 2 2 4 0 6M14 3c3 3 3 7 0 10M17 1c4 4 4 10 0 14" stroke="#aaa" strokeWidth="1.3" /></Icon></TrayItem>
          <TrayItem $w={40} aria-label="Link"><Icon w={20} h={20}><path d="M6 12a3.5 3.5 0 1 0 0 6M10 18v-6h3a2 2 0 0 1 0 4h-3" stroke="#999" strokeWidth="1.5" /><path d="M9 7l5-5" stroke="#999" strokeWidth="2" /></Icon></TrayItem>
          <TrayItem $w={40} aria-label="Touch keyboard"><Icon w={30} h={18}><path d="M1 1h28v16H1z" stroke="#999" strokeWidth="1.5" /><path d="M5 5h20M5 9h20" stroke="#999" strokeWidth="2" strokeDasharray="2 2" /><path d="M8 13h14" stroke="#999" strokeWidth="1.5" /></Icon></TrayItem>
          <TrayItem $w={46}>ENG</TrayItem>
          <Clock>13:52<br />20-09-2020</Clock>
          <TrayItem $w={68} aria-label="Notifications"><Icon w={20} h={20}><path d="M0 1h20v15h-7l-3 4-3-4H0z" fill="#bbb" /><path d="M4 5h12M4 8.5h12M4 12h8" stroke="#333" strokeWidth="1.4" /></Icon></TrayItem>
          <ShowDesktop aria-label="Show desktop" />
        </Tray>
      </Taskbar>

      <Shade />

      <TopOverlay>
        <VideoTitle>CMOS NAND and NOR Gate Using Microwind Software</VideoTitle>
        <Control aria-label="Watch later"><Icon w={40} h={40}><circle cx="20" cy="20" r="19" fill="#eee" /><path d="M18.500 9v12.500l10 5.500" stroke="#707070" strokeWidth="3.6" /></Icon></Control>
        <Control aria-label="Share"><Icon w={40} h={36}><path d="M24 0l16 17-16 17V24C13 24 5 27 0 36 2 22 11 12 24 10z" fill="#eee" /></Icon></Control>
      </TopOverlay>

      <BottomOverlay>
        <Seek
          type="range"
          aria-label="Seek"
          min={0}
          max={total}
          value={seconds}
          $played={(seconds / total) * 100}
          onChange={(e) => setSeconds(Number(e.target.value))}
        />
        <Controls>
          <Control aria-label="Play" $gap={52}><Icon w={24} h={32}><path d="M0 0l24 16L0 32z" fill="#eee" /></Icon></Control>
          <Control aria-label="Next" $gap={40}><Icon w={24} h={24}><path d="M0 0l17 12L0 24zM19 0h5v24h-5z" fill="#eee" /></Icon></Control>
          <Control aria-label="Mute" $gap={34}><Icon w={22} h={26}><path d="M0 8h6l8-8v26l-8-8H0zM16 7c7 2 7 10 0 12z" fill="#eee" /></Icon></Control>
          <Time>{clock(seconds)} / {clock(total)}</Time>
          <RightControls>
            <Control aria-label="Autoplay is on" $gap={26}><Icon w={53} h={28}><rect y="4" width="44" height="19" rx="9.5" fill="#777" /><circle cx="38" cy="14" r="14" fill="#eee" /><path d="M34 8l10 6-10 6z" fill="#222" /></Icon></Control>
            <Control aria-label="Subtitles" $gap={38}><Icon w={32} h={24}><rect width="32" height="24" rx="3" fill="#808080" /><path d="M14 10V7.500H6v9h8V14M27 10V7.500h-8v9h8V14" stroke="#222" strokeWidth="3" /></Icon></Control>
            <Control aria-label="Settings" $gap={38}>
              <Icon w={28} h={28} box="2 2 20 20"><path fill="#eee" d="M19.430 12.980c.040-.320.070-.640.070-.980s-.030-.660-.070-.980l2.110-1.650c.190-.150.240-.420.120-.640l-2-3.460c-.120-.220-.390-.300-.610-.220l-2.490 1c-.520-.400-1.080-.730-1.690-.980l-.380-2.650C14.460 2.180 14.250 2 14 2h-4c-.250 0-.460.180-.490.420l-.380 2.650c-.610.250-1.170.590-1.690.980l-2.490-1c-.230-.090-.490 0-.610.220l-2 3.460c-.130.220-.070.490.120.640l2.110 1.650c-.040.320-.070.650-.070.980s.030.660.070.980l-2.110 1.650c-.190.150-.240.420-.120.640l2 3.460c.120.220.390.300.610.220l2.490-1c.520.400 1.080.730 1.690.980l.380 2.650c.030.240.240.420.490.420h4c.250 0 .460-.180.490-.420l.380-2.650c.610-.250 1.170-.590 1.690-.980l2.490 1c.230.090.490 0 .610-.220l2-3.460c.120-.220.070-.490-.120-.640zM12 15.500a3.500 3.500 0 1 1 0-7 3.500 3.500 0 0 1 0 7z" /></Icon>
            </Control>
            <Control aria-label="Exit full screen"><Icon w={28} h={28}><path d="M0 9h9V0M19 0v9h9M28 19h-9v9M9 28v-9H0" stroke="#eee" strokeWidth="4" /></Icon></Control>
          </RightControls>
        </Controls>
        <ScrollHint>
          Scroll for details
          <Icon w={16} h={10}><path d="M1 1l7 7 7-7" stroke="#eee" strokeWidth="2.6" /></Icon>
        </ScrollHint>
      </BottomOverlay>
    </Player>
  );
}
